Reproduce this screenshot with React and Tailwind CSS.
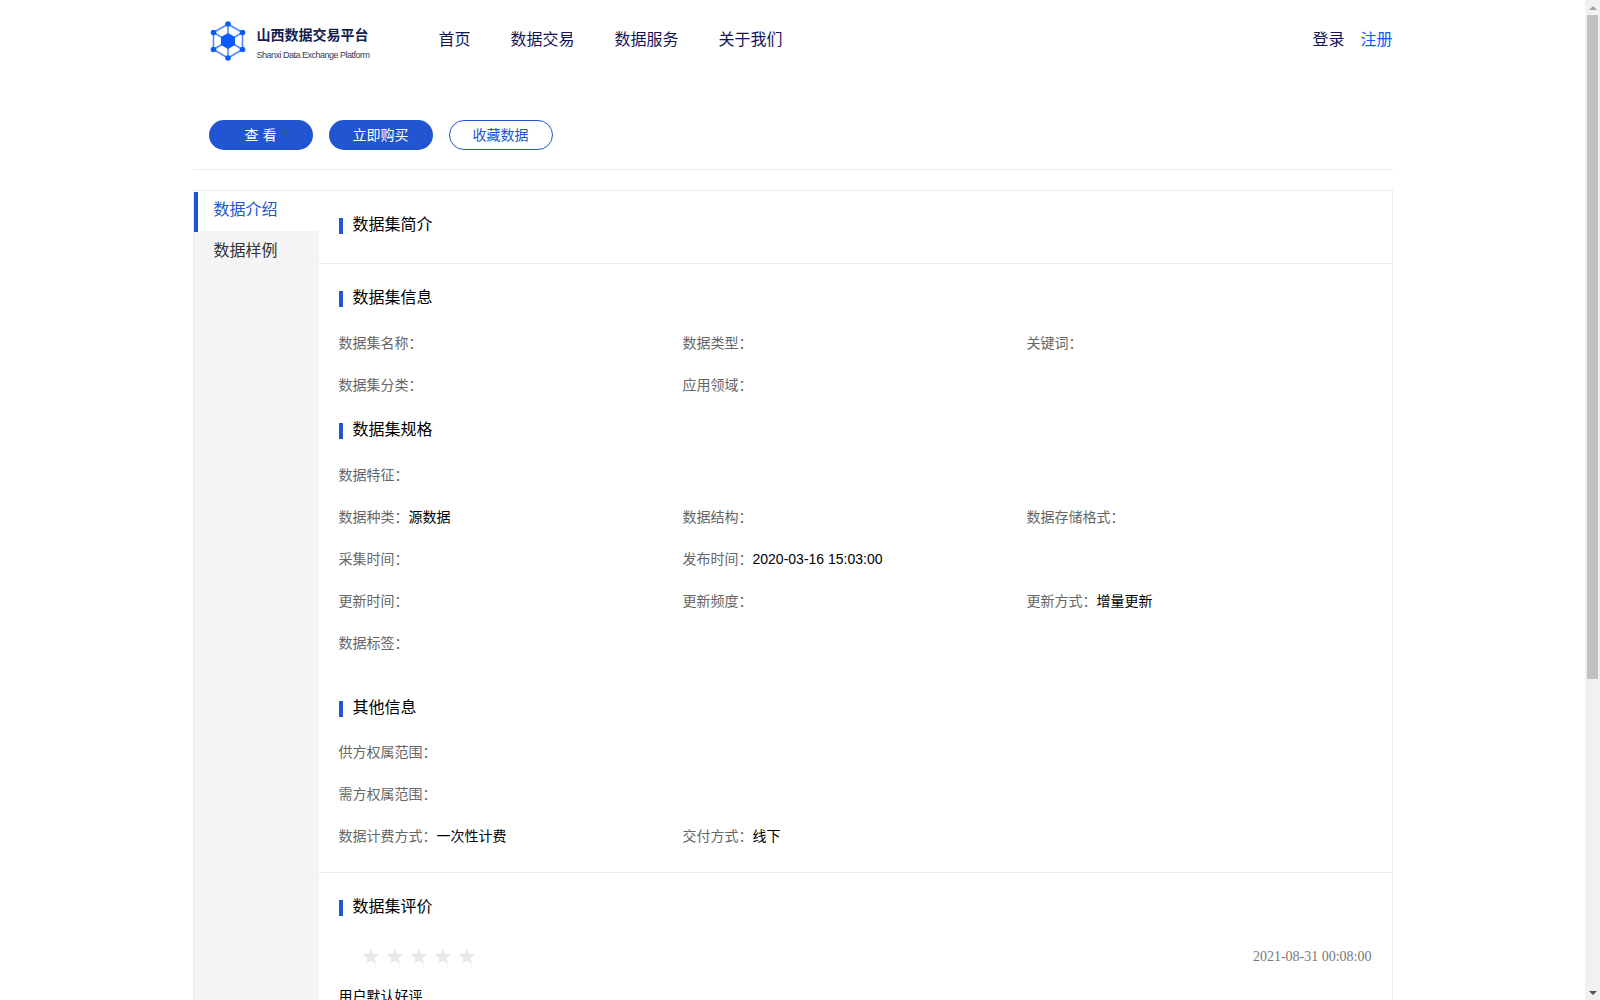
const navItems = ['首页', '数据交易', '数据服务', '关于我们']

function Logo() {
  const nodes = [
    [19, 4],
    [33.5, 12.5],
    [33.5, 29.5],
    [19, 38],
    [4.5, 29.5],
    [4.5, 12.5],
  ]
  return (
    <svg width="38" height="42" viewBox="0 0 38 42" className="shrink-0">
      <polygon points="19,4 33.5,12.5 33.5,29.5 19,38 4.5,29.5 4.5,12.5" fill="none" stroke="#4d8bff" strokeWidth="1.6" />
      {nodes.map(([x, y]) => (
        <line key={`${x}-${y}`} x1="19" y1="21" x2={x} y2={y} stroke="#4d8bff" strokeWidth="1.6" />
      ))}
      <polygon points="19,13 26,17 26,25 19,29 12,25 12,17" fill="#0a5cff" />
      {nodes.map(([x, y]) => (
        <circle key={`c-${x}-${y}`} cx={x} cy={y} r="2.8" fill="#0a5cff" />
      ))}
    </svg>
  )
}

function Heading({ children, className = '' }) {
  return (
    <div className={`flex h-5 items-center text-base text-black ${className}`}>
      <span className="mr-[10px] mt-[2px] h-4 w-1 bg-[#2155d1]" />
      {children}
    </div>
  )
}

function Field({ label, value, wide }) {
  return (
    <div className={`flex h-[42px] items-center text-sm ${wide ? 'col-span-3' : ''}`}>
      <span className="text-[#666]">{label}：</span>
      {value && <span className="text-black">{value}</span>}
    </div>
  )
}

function Star() {
  return (
    <svg width="18" height="18" viewBox="0 0 24 24" className="shrink-0">
      <polygon points="12,1.5 15,9 23,9.5 16.8,14.6 18.9,22.5 12,18 5.1,22.5 7.2,14.6 1,9.5 9,9" fill="#e8e8e8" />
    </svg>
  )
}

export default function App() {
  return (
    <div className="flex h-screen overflow-hidden bg-white font-['Liberation_Sans','Noto_Sans_CJK_SC',sans-serif]">
      <div className="min-w-0 flex-1">
        <div className="mx-auto w-[1200px]">
          <header className="flex h-[78px] items-center pl-4 pt-[2px] text-base text-[#14145a]">
            <div className="mt-[2px] flex w-[230px] items-center">
              <Logo />
              <div className="ml-[10px] mt-[3px] flex flex-col">
                <span className="text-sm font-bold leading-[20px] text-[#14204f]">山西数据交易平台</span>
                <span className="mt-[4px] text-[9px] leading-[12px] tracking-[-0.5px] text-[#333c5f]">Shanxi Data Exchange Platform</span>
              </div>
            </div>
            <nav className="flex gap-10">
              {navItems.map((item) => (
                <span key={item}>{item}</span>
              ))}
            </nav>
            <div className="ml-auto flex gap-4">
              <span>登录</span>
              <span className="text-[#0a5cff]">注册</span>
            </div>
          </header>

          <div className="mt-[42px] flex gap-4 border-b border-[#ebebeb] pb-[19px] pl-4 text-sm">
            <button className="h-[30px] w-[104px] rounded-full bg-[#2155d1] text-white">查 看</button>
            <button className="h-[30px] w-[104px] rounded-full bg-[#2155d1] text-white">立即购买</button>
            <button className="h-[30px] w-[104px] rounded-full border border-[#2155d1] text-[#2155d1]">收藏数据</button>
          </div>

          <div className="mt-5 flex border border-[#ebebeb]">
            <aside className="w-[125px] shrink-0 bg-[#f4f4f4] text-base">
              <div className="relative flex h-10 items-center bg-white pb-[2px] pl-5 text-[#2155d1]">
                <span className="absolute left-0 top-px h-10 w-1 bg-[#2155d1]" />
                数据介绍
              </div>
              <div className="flex h-10 items-center pl-5 text-[#333]">数据样例</div>
            </aside>

            <main className="min-w-0 flex-1">
              <section className="h-[73px] border-b border-[#ebebeb] px-5 pt-6">
                <Heading>数据集简介</Heading>
              </section>

              <section className="border-b border-[#ebebeb] px-5 pb-[15px] pt-6">
                <Heading>数据集信息</Heading>
                <div className="mt-[14px] grid grid-cols-[344px_344px_1fr]">
                  <Field label="数据集名称" />
                  <Field label="数据类型" />
                  <Field label="关键词" />
                  <Field label="数据集分类" />
                  <Field label="应用领域" />
                </div>

                <Heading className="mt-[14px]">数据集规格</Heading>
                <div className="mt-[14px] grid grid-cols-[344px_344px_1fr]">
                  <Field label="数据特征" wide />
                  <Field label="数据种类" value="源数据" />
                  <Field label="数据结构" />
                  <Field label="数据存储格式" />
                  <Field label="采集时间" />
                  <Field label="发布时间" value="2020-03-16 15:03:00" />
                  <div />
                  <Field label="更新时间" />
                  <Field label="更新频度" />
                  <Field label="更新方式" value="增量更新" />
                  <Field label="数据标签" wide />
                </div>

                <Heading className="mt-[34px]">其他信息</Heading>
                <div className="mt-[13px] grid grid-cols-[344px_344px_1fr]">
                  <Field label="供方权属范围" wide />
                  <Field label="需方权属范围" wide />
                  <Field label="数据计费方式" value="一次性计费" />
                  <Field label="交付方式" value="线下" />
                </div>
              </section>

              <section className="px-5 pt-6">
                <Heading>数据集评价</Heading>
                <div className="mt-[29px] flex h-5 items-center justify-between pl-[23px]">
                  <div className="flex gap-[6px]">
                    <Star />
                    <Star />
                    <Star />
                    <Star />
                    <Star />
                  </div>
                  <span className="mt-[2px] font-['Liberation_Serif',serif] text-sm text-[#777]">2021-08-31 00:08:00</span>
                </div>
                <p className="mt-5 text-sm leading-5 text-black">用户默认好评</p>
                <div className="h-40" />
              </section>
            </main>
          </div>
        </div>
      </div>

      <div className="flex w-[15px] shrink-0 flex-col bg-[#f1f1f1]">
        <div className="flex h-[15px] items-center justify-center">
          <span className="h-0 w-0 border-x-[4px] border-b-[4px] border-x-transparent border-b-[#a3a3a3]" />
        </div>
        <div className="ml-[2px] h-[664px] w-[11px] bg-[#c1c1c1]" />
        <div className="mt-auto flex h-[15px] items-center justify-center">
          <span className="h-0 w-0 border-x-[4px] border-t-[4px] border-x-transparent border-t-[#505050]" />
        </div>
      </div>
    </div>
  )
}
